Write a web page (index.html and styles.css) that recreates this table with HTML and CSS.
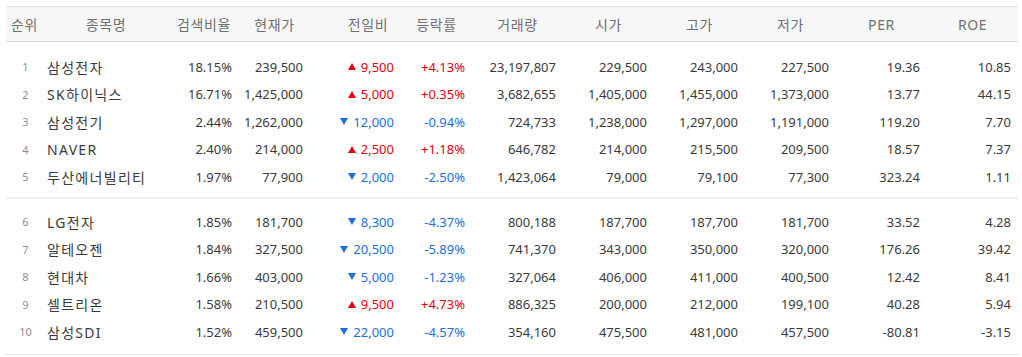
FILE: index.html
```html
<!DOCTYPE html>
<html lang="ko">
<head>
<meta charset="utf-8">
<link rel="stylesheet" href="styles.css">
</head>
<body>
<div class="board">
  <div class="row head">
    <div class="c">순위</div>
    <div class="c">종목명</div>
    <div class="c">검색비율</div>
    <div class="c">현재가</div>
    <div class="c chg-h">전일비</div>
    <div class="c">등락률</div>
    <div class="c">거래량</div>
    <div class="c">시가</div>
    <div class="c">고가</div>
    <div class="c">저가</div>
    <div class="c">PER</div>
    <div class="c">ROE</div>
  </div>
  <div class="group">
    <div class="row">
      <div class="rank">1</div><div class="name">삼성전자</div><div class="n">18.15%</div><div class="n">239,500</div>
      <div class="n chg up"><svg class="tri" viewBox="0 0 8 7"><path d="M4 0L8 7H0Z"/></svg>9,500</div><div class="n up">+4.13%</div>
      <div class="n">23,197,807</div><div class="n">229,500</div><div class="n">243,000</div><div class="n">227,500</div><div class="n">19.36</div><div class="n">10.85</div>
    </div>
    <div class="row">
      <div class="rank">2</div><div class="name">SK하이닉스</div><div class="n">16.71%</div><div class="n">1,425,000</div>
      <div class="n chg up"><svg class="tri" viewBox="0 0 8 7"><path d="M4 0L8 7H0Z"/></svg>5,000</div><div class="n up">+0.35%</div>
      <div class="n">3,682,655</div><div class="n">1,405,000</div><div class="n">1,455,000</div><div class="n">1,373,000</div><div class="n">13.77</div><div class="n">44.15</div>
    </div>
    <div class="row">
      <div class="rank">3</div><div class="name">삼성전기</div><div class="n">2.44%</div><div class="n">1,262,000</div>
      <div class="n chg down"><svg class="tri" viewBox="0 0 8 7"><path d="M0 0H8L4 7Z"/></svg>12,000</div><div class="n down">-0.94%</div>
      <div class="n">724,733</div><div class="n">1,238,000</div><div class="n">1,297,000</div><div class="n">1,191,000</div><div class="n">119.20</div><div class="n">7.70</div>
    </div>
    <div class="row">
      <div class="rank">4</div><div class="name">NAVER</div><div class="n">2.40%</div><div class="n">214,000</div>
      <div class="n chg up"><svg class="tri" viewBox="0 0 8 7"><path d="M4 0L8 7H0Z"/></svg>2,500</div><div class="n up">+1.18%</div>
      <div class="n">646,782</div><div class="n">214,000</div><div class="n">215,500</div><div class="n">209,500</div><div class="n">18.57</div><div class="n">7.37</div>
    </div>
    <div class="row">
      <div class="rank">5</div><div class="name">두산에너빌리티</div><div class="n">1.97%</div><div class="n">77,900</div>
      <div class="n chg down"><svg class="tri" viewBox="0 0 8 7"><path d="M0 0H8L4 7Z"/></svg>2,000</div><div class="n down">-2.50%</div>
      <div class="n">1,423,064</div><div class="n">79,000</div><div class="n">79,100</div><div class="n">77,300</div><div class="n">323.24</div><div class="n">1.11</div>
    </div>
  </div>
  <div class="group last">
    <div class="row">
      <div class="rank">6</div><div class="name">LG전자</div><div class="n">1.85%</div><div class="n">181,700</div>
      <div class="n chg down"><svg class="tri" viewBox="0 0 8 7"><path d="M0 0H8L4 7Z"/></svg>8,300</div><div class="n down">-4.37%</div>
      <div class="n">800,188</div><div class="n">187,700</div><div class="n">187,700</div><div class="n">181,700</div><div class="n">33.52</div><div class="n">4.28</div>
    </div>
    <div class="row">
      <div class="rank">7</div><div class="name">알테오젠</div><div class="n">1.84%</div><div class="n">327,500</div>
      <div class="n chg down"><svg class="tri" viewBox="0 0 8 7"><path d="M0 0H8L4 7Z"/></svg>20,500</div><div class="n down">-5.89%</div>
      <div class="n">741,370</div><div class="n">343,000</div><div class="n">350,000</div><div class="n">320,000</div><div class="n">176.26</div><div class="n">39.42</div>
    </div>
    <div class="row">
      <div class="rank">8</div><div class="name">현대차</div><div class="n">1.66%</div><div class="n">403,000</div>
      <div class="n chg down"><svg class="tri" viewBox="0 0 8 7"><path d="M0 0H8L4 7Z"/></svg>5,000</div><div class="n down">-1.23%</div>
      <div class="n">327,064</div><div class="n">406,000</div><div class="n">411,000</div><div class="n">400,500</div><div class="n">12.42</div><div class="n">8.41</div>
    </div>
    <div class="row">
      <div class="rank">9</div><div class="name">셀트리온</div><div class="n">1.58%</div><div class="n">210,500</div>
      <div class="n chg up"><svg class="tri" viewBox="0 0 8 7"><path d="M4 0L8 7H0Z"/></svg>9,500</div><div class="n up">+4.73%</div>
      <div class="n">886,325</div><div class="n">200,000</div><div class="n">212,000</div><div class="n">199,100</div><div class="n">40.28</div><div class="n">5.94</div>
    </div>
    <div class="row">
      <div class="rank">10</div><div class="name">삼성SDI</div><div class="n">1.52%</div><div class="n">459,500</div>
      <div class="n chg down"><svg class="tri" viewBox="0 0 8 7"><path d="M0 0H8L4 7Z"/></svg>22,000</div><div class="n down">-4.57%</div>
      <div class="n">354,160</div><div class="n">475,500</div><div class="n">481,000</div><div class="n">457,500</div><div class="n">-80.81</div><div class="n">-3.15</div>
    </div>
  </div>
</div>
</body>
</html>
```

FILE: styles.css
```css
html, body {
  margin: 0;
  padding: 0;
  background: #ffffff;
}

body {
  font-family: "Noto Sans", "Noto Sans CJK KR", sans-serif;
  color: #333333;
}

.board {
  width: 1012px;
  margin: 6px 0 0 6px;
}

.row {
  display: grid;
  grid-template-columns: 37px 126px 70px 71px 91px 71px repeat(6, 91px);
  align-items: center;
  height: 27.5px;
}

.head {
  height: 34px;
  background: #f7f7f7;
  border-top: 1px solid #dcdcdc;
  border-bottom: 1px solid #d6d6d6;
  color: #707070;
  font-size: 14px;
  letter-spacing: 0.6px;
}

.head .c {
  text-align: center;
}

.head .chg-h {
  padding-left: 25px;
}

.group {
  padding: 11px 0 6.5px;
  border-bottom: 2px solid #efefef;
}

.group.last {
  padding: 9px 0 8.5px;
  border-bottom: 1px solid #e6e6e6;
}

.rank {
  text-align: center;
  font-size: 11px;
  color: #909090;
  padding-left: 2px;
}

.name {
  padding-left: 4px;
  font-size: 14px;
  letter-spacing: 1.3px;
  color: #3a3a3a;
  white-space: nowrap;
}

.n {
  text-align: right;
  padding-right: 7px;
  font-size: 13px;
  white-space: nowrap;
  color: #3a3a3a;
}

.chg {
  display: flex;
  justify-content: flex-end;
  align-items: center;
}

.tri {
  width: 8px;
  height: 7px;
  margin-right: 5px;
  fill: currentColor;
}

.n.up,
.up {
  color: #e8000b;
}

.n.down,
.down {
  color: #1b6fe0;
}
```
